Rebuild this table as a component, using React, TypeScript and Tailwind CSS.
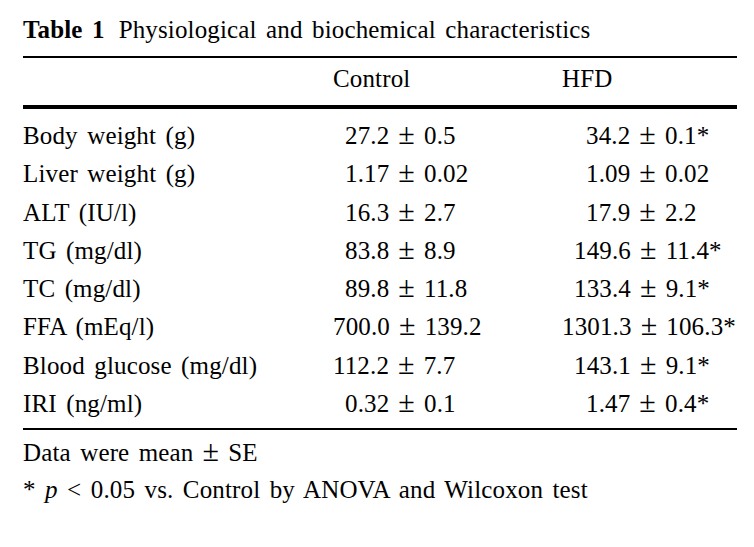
const rows: [string, string, string, string, string][] = [
  // label, control, control indent, hfd, hfd indent
  ['Body weight (g)', '27.2 ± 0.5', 'pl-[12px]', '34.2 ± 0.1*', 'pl-[24px]'],
  ['Liver weight (g)', '1.17 ± 0.02', 'pl-[12px]', '1.09 ± 0.02', 'pl-[24px]'],
  ['ALT (IU/l)', '16.3 ± 2.7', 'pl-[12px]', '17.9 ± 2.2', 'pl-[24px]'],
  ['TG (mg/dl)', '83.8 ± 8.9', 'pl-[12px]', '149.6 ± 11.4*', 'pl-[12px]'],
  ['TC (mg/dl)', '89.8 ± 11.8', 'pl-[12px]', '133.4 ± 9.1*', 'pl-[12px]'],
  ['FFA (mEq/l)', '700.0 ± 139.2', 'pl-0', '1301.3 ± 106.3*', 'pl-0'],
  ['Blood glucose (mg/dl)', '112.2 ± 7.7', 'pl-0', '143.1 ± 9.1*', 'pl-[12px]'],
  ['IRI (ng/ml)', '0.32 ± 0.1', 'pl-[12px]', '1.47 ± 0.4*', 'pl-[24px]'],
];

function Pm() {
  return <span className="inline-block mx-[9px] text-[30px] leading-none">±</span>;
}

function Val({ text }: { text: string }) {
  const [a, b] = text.split(' ± ');
  return (
    <>
      {a}
      <Pm />
      {b}
    </>
  );
}

export default function App() {
  return (
    <div
      className="w-[754px] h-[547px] bg-white text-black pl-[23px] text-[25px] tracking-[0.15px] [word-spacing:3px]"
      style={{ fontFamily: '"Liberation Serif", "Times New Roman", serif' }}
    >
      <div className="pt-[15px] leading-[30px] mb-[11px] whitespace-nowrap">
        <span className="font-bold">Table 1</span>
        <span className="ml-[14px]">Physiological and biochemical characteristics</span>
      </div>

      <div className="w-[714px] border-t-2 border-black" />

      <div className="flex w-[714px] pt-[6px] pb-[11px] leading-[30px]">
        <div className="w-[310px]" />
        <div className="w-[229px]">Control</div>
        <div className="flex-1">HFD</div>
      </div>

      <div className="w-[714px] border-t-4 border-black" />

      <div className="pt-[8px] pb-[5px] w-[714px]">
        {rows.map(([label, c, ci, h, hi]) => (
          <div key={label} className="flex leading-[38.3px] whitespace-nowrap">
            <div className="w-[310px]">{label}</div>
            <div className={`w-[229px] ${ci}`}>
              <Val text={c} />
            </div>
            <div className={`flex-1 ${hi}`}>
              <Val text={h} />
            </div>
          </div>
        ))}
      </div>

      <div className="w-[714px] border-t-2 border-black" />

      <div className="pt-[4px] leading-[37px] whitespace-nowrap">
        <div>
          Data were mean
          <Pm />
          SE
        </div>
        <div>
          * <span className="italic">p</span> &lt; 0.05 vs. Control by ANOVA and Wilcoxon test
        </div>
      </div>
    </div>
  );
}
